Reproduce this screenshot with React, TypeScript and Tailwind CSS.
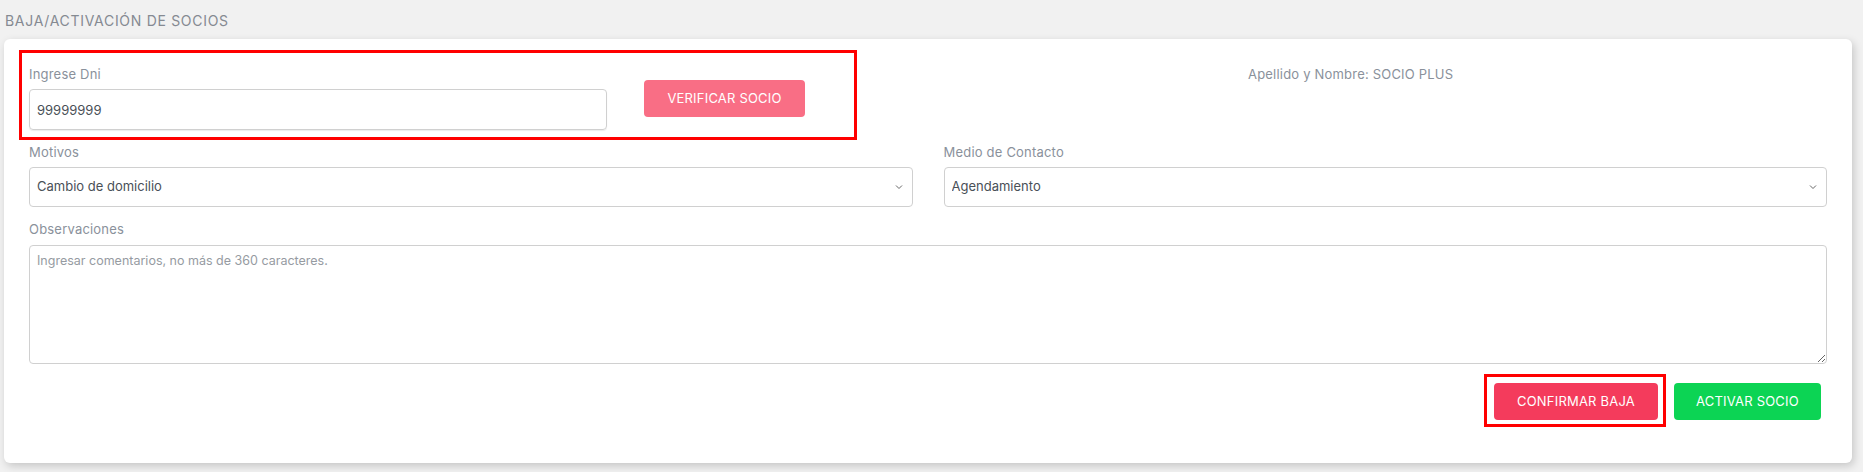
import React from "react";

const Chevron = () => (
  <svg
    className="pointer-events-none absolute right-[10px] top-1/2 -translate-y-1/2"
    width="8"
    height="5"
    viewBox="0 0 8 5"
    fill="none"
  >
    <path d="M1 1l3 3 3-3" stroke="#666" strokeWidth="1" />
  </svg>
);

export default function App() {
  return (
    <div
      className="w-full h-[472px] bg-[#f1f1f1] overflow-hidden"
      style={{ fontFamily: "Inter, 'Noto Sans', 'Liberation Sans', sans-serif" }}
    >
      <div className="h-[39px] pl-[5px] pt-[12px] text-[14px] leading-[18px] text-[#858a92] tracking-[0.7px]">
        BAJA/ACTIVACIÓN DE SOCIOS
      </div>
      <div className="ml-[4px] mr-[11px] bg-white rounded-[6px] shadow-[2px_3px_8px_rgba(0,0,0,0.18)] pt-[11px] pb-[36px] px-[25px]">
        {/* Row 1 */}
        <div className="flex items-start -ml-[10px]">
          <div className="border-[3px] border-[#ff0000] w-[838px] pl-[7px] pr-[49px] pt-[13px] pb-[7px] flex items-start">
            <div className="w-[578px]">
              <div className="text-[13px] leading-[16px] text-[#8a919b] tracking-[0.2px] mb-[7px]">Ingrese Dni</div>
              <input
                className="w-full h-[41px] border border-[#d0d0d0] rounded-[4px] px-[7px] text-[13px] text-[#495057] outline-none shadow-[0_1px_1px_rgba(0,0,0,0.08)]"
                defaultValue="99999999"
              />
            </div>
            <button className="ml-[37px] mt-[14px] w-[161px] h-[37px] rounded-[4px] bg-[#f96e85] text-white text-[13px] tracking-[0.2px]">
              VERIFICAR SOCIO
            </button>
          </div>
          <div className="ml-[391px] pt-[16px] text-[13px] leading-[16px] text-[#8a919b] tracking-[0.2px]">
            Apellido y Nombre: SOCIO PLUS
          </div>
        </div>

        {/* Row 2 */}
        <div className="grid grid-cols-2 gap-x-[31px] mt-[4px]">
          <div>
            <div className="text-[13px] leading-[16px] text-[#8a919b] tracking-[0.2px] mb-[7px]">Motivos</div>
            <div className="relative">
              <select
                className="w-full h-[40px] appearance-none border border-[#d0d0d0] rounded-[4px] px-[7px] text-[13px] text-[#495057] bg-white outline-none"
                defaultValue="a"
              >
                <option value="a">Cambio de domicilio</option>
              </select>
              <Chevron />
            </div>
          </div>
          <div>
            <div className="text-[13px] leading-[16px] text-[#8a919b] tracking-[0.2px] mb-[7px]">Medio de Contacto</div>
            <div className="relative">
              <select
                className="w-full h-[40px] appearance-none border border-[#d0d0d0] rounded-[4px] px-[7px] text-[13px] text-[#495057] bg-white outline-none"
                defaultValue="a"
              >
                <option value="a">Agendamiento</option>
              </select>
              <Chevron />
            </div>
          </div>
        </div>

        {/* Row 3 */}
        <div className="mt-[14px]">
          <div className="text-[13px] leading-[16px] text-[#8a919b] tracking-[0.2px] mb-[8px]">Observaciones</div>
          <textarea
            className="block w-full h-[119px] border border-[#d0d0d0] rounded-[4px] px-[7px] py-[6px] text-[12.5px] text-[#495057] placeholder:text-[#969ba2] outline-none"
            placeholder="Ingresar comentarios, no más de 360 caracteres."
          />
        </div>

        {/* Row 4 */}
        <div className="flex justify-end items-start mt-[10px] pr-[6px]">
          <div className="border-[3px] border-[#ff0000] pl-[7px] pr-[5px] pt-[6px] pb-[4px]">
            <button className="w-[164px] h-[37px] rounded-[4px] bg-[#f43b5c] text-white text-[13px] tracking-[0.2px]">
              CONFIRMAR BAJA
            </button>
          </div>
          <button className="ml-[8px] mt-[9px] w-[147px] h-[37px] rounded-[4px] bg-[#0cd454] text-white text-[13px] tracking-[0.2px]">
            ACTIVAR SOCIO
          </button>
        </div>
      </div>
    </div>
  );
}
